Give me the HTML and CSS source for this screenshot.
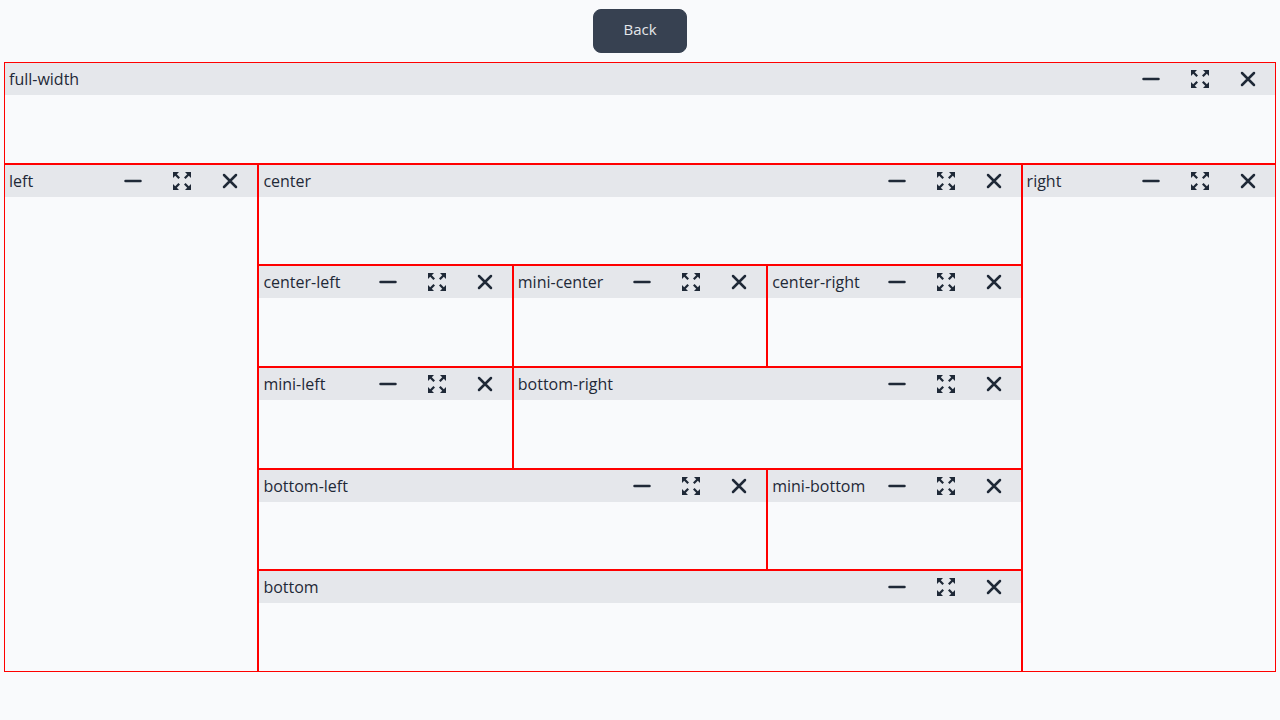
FILE: index.html
```html
<!DOCTYPE html>
<html lang="en">
<head>
<meta charset="utf-8">
<meta name="viewport" content="width=device-width, initial-scale=1">
<title>Panels</title>
<link rel="stylesheet" href="styles.css">
</head>
<body>
<header class="toolbar"><button class="back" type="button">Back</button></header>
<main class="panels" id="panels"></main>
<template id="panel-template">
  <section class="panel">
    <header class="panel-header">
      <h2 class="panel-title"></h2>
      <div class="panel-actions">
        <button class="action" type="button" aria-label="Minimize">
          <svg class="icon" viewBox="0 0 24 24"><path d="M5.500 12h15" stroke-width="2.500" stroke-linecap="round"/></svg>
        </button>
        <button class="action" type="button" aria-label="Maximize">
          <svg class="icon" viewBox="0 0 24 24"><path class="solid" d="M4 3h6L7.800 5.200 11 8.400 9.400 10 6.200 6.800 4 9zM22 3h-6l2.200 2.200L15 8.400l1.600 1.600 3.200-3.200L22 9zM4 21h6l-2.200-2.200L11 15.600 9.400 14l-3.200 3.200L4 15zM22 21h-6l2.200-2.200-3.200-3.200 1.600-1.600 3.200 3.200L22 15z"/></svg>
        </button>
        <button class="action" type="button" aria-label="Close">
          <svg class="icon" viewBox="0 0 24 24"><path d="M6 6l12 12M18 6L6 18" stroke-width="2.500" stroke-linecap="round"/></svg>
        </button>
      </div>
    </header>
  </section>
</template>
<script src="panels.js"></script>
</body>
</html>
```

FILE: styles.css
```css
* { box-sizing: border-box; }

body {
  margin: 0;
  background: #f9fafc;
  color: #1f2937;
  font-family: "Segoe UI", "Open Sans", "Noto Sans", sans-serif;
  font-size: 15px;
  line-height: 24px;
}

.toolbar {
  display: flex;
  justify-content: center;
  padding: 9px 4px;
}

.back {
  height: 44px;
  padding: 0 29px 4px;
  border: 1px solid #374151;
  border-radius: 8px;
  background: #374151;
  color: #e5e7eb;
  font: inherit;
}

.panels {
  display: grid;
  grid-template-columns: repeat(5, minmax(0, 1fr));
  grid-template-rows: repeat(6, minmax(0, 1fr));
  grid-template-areas:
    "full full full full full"
    "left center center center right"
    "left center-left mini-center center-right right"
    "left mini-left bottom-right bottom-right right"
    "left bottom-left bottom-left mini-bottom right"
    "left bottom bottom bottom right";
  min-height: calc(100vh - 110px);
  margin: 0 4px 48px;
}

.panel { border: 1px solid #ff0000; }

.area-full-width { grid-area: full; }
.area-left { grid-area: left; }
.area-center { grid-area: center; }
.area-right { grid-area: right; }
.area-center-left { grid-area: center-left; }
.area-mini-center { grid-area: mini-center; }
.area-center-right { grid-area: center-right; }
.area-mini-left { grid-area: mini-left; }
.area-bottom-right { grid-area: bottom-right; }
.area-bottom-left { grid-area: bottom-left; }
.area-mini-bottom { grid-area: mini-bottom; }
.area-bottom { grid-area: bottom; }

.panel-header {
  display: flex;
  align-items: center;
  justify-content: space-between;
  height: 32px;
  padding: 0 3px 0 4px;
  background: #e5e7eb;
}

.panel-title {
  margin: 0;
  font-size: 16px;
  font-weight: 500;
  white-space: nowrap;
}

.panel-actions {
  display: flex;
  gap: 1px;
}

.action {
  display: flex;
  padding: 4px 12px;
  border: 0;
  background: transparent;
  color: inherit;
}

.icon {
  width: 24px;
  height: 24px;
  fill: none;
  stroke: currentColor;
}

.solid {
  fill: currentColor;
  stroke: none;
}
```

FILE: panels.js
```js
const names = [
  "full-width", "left", "center", "right", "center-left", "mini-center",
  "center-right", "mini-left", "bottom-right", "bottom-left", "mini-bottom", "bottom"
];
const container = document.getElementById("panels");
const template = document.getElementById("panel-template");
for (const name of names) {
  const panel = template.content.cloneNode(true);
  panel.querySelector(".panel").classList.add("area-" + name);
  panel.querySelector(".panel-title").textContent = name;
  container.append(panel);
}
```
